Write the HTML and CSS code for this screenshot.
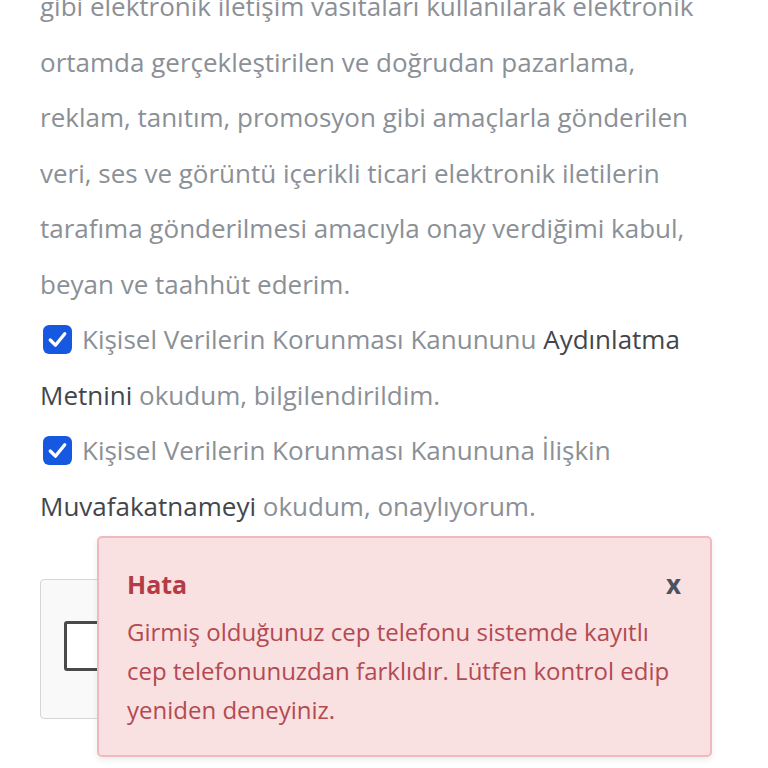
FILE: index.html
```html
<!DOCTYPE html>
<html lang="tr">
<head>
    <meta charset="UTF-8">
    <meta name="viewport" content="width=device-width, initial-scale=1.0">
    <title>Üyelik</title>
    <link rel="stylesheet" href="styles.css">
</head>
<body>

<div class="container">
    <p class="consent-text">gibi elektronik iletişim vasıtaları kullanılarak elektronik ortamda gerçekleştirilen ve doğrudan pazarlama, reklam, tanıtım, promosyon gibi amaçlarla gönderilen veri, ses ve görüntü içerikli ticari elektronik iletilerin tarafıma gönderilmesi amacıyla onay verdiğimi kabul, beyan ve taahhüt ederim.</p>

    <p class="consent-text">
        <span class="check-box">
            <svg viewBox="0 0 28 28" width="29" height="29"><rect x="0" y="0" width="28" height="28" rx="6" fill="#1658e0"/><path d="M7 14.5 L12 19.5 L21 8.5" fill="none" stroke="#fff" stroke-width="3.2" stroke-linecap="round" stroke-linejoin="round"/></svg>
        </span>Kişisel Verilerin Korunması Kanununu <a href="#" class="link">Aydınlatma Metnini</a> okudum, bilgilendirildim.
    </p>

    <p class="consent-text">
        <span class="check-box">
            <svg viewBox="0 0 28 28" width="29" height="29"><rect x="0" y="0" width="28" height="28" rx="6" fill="#1658e0"/><path d="M7 14.5 L12 19.5 L21 8.5" fill="none" stroke="#fff" stroke-width="3.2" stroke-linecap="round" stroke-linejoin="round"/></svg>
        </span>Kişisel Verilerin Korunması Kanununa İlişkin <a href="#" class="link">Muvafakatnameyi</a> okudum, onaylıyorum.
    </p>

    <div class="captcha-box">
        <div class="captcha-check"></div>
    </div>
</div>

<div class="alert">
    <div class="alert-header">
        <span class="alert-title">Hata</span>
        <span class="alert-close">x</span>
    </div>
    <p class="alert-text">Girmiş olduğunuz cep telefonu sistemde kayıtlı cep telefonunuzdan farklıdır. Lütfen kontrol edip yeniden deneyiniz.</p>
</div>

</body>
</html>
```

FILE: styles.css
```css
* {
    margin: 0;
    padding: 0;
    box-sizing: border-box;
    font-family: "Open Sans", Arial, sans-serif;
}

body {
    background: #ffffff;
    width: 768px;
    height: 768px;
    overflow: hidden;
    position: relative;
}

.container {
    width: 730px;
    padding: 0 0 0 40px;
    margin-top: -21px;
}

.consent-text {
    font-size: 26px;
    line-height: 55.5px;
    color: #8b9096;
}

.check-box {
    display: inline-block;
    vertical-align: -5px;
    margin: 0 10px 0 3px;
}

.check-box svg {
    display: block;
}

.link {
    color: #41464d;
    text-decoration: none;
}

.captcha-box {
    margin-top: 45px;
    width: 300px;
    height: 140px;
    background: #f9f9f9;
    border: 1px solid #d6d6d6;
    border-radius: 4px;
    padding: 41px 0 0 23px;
}

.captcha-check {
    width: 50px;
    height: 50px;
    background: #ffffff;
    border: 3px solid #4a4a4a;
    border-radius: 3px;
}

.alert {
    position: absolute;
    left: 97px;
    top: 536px;
    width: 615px;
    height: 221px;
    background: #f9e0e1;
    border: 2px solid #f1b8be;
    border-radius: 5px;
    box-shadow: 0 3px 6px rgba(0, 0, 0, 0.08);
    padding: 28px 28px 0 28px;
}

.alert-header {
    display: flex;
    justify-content: space-between;
    align-items: center;
    margin-bottom: 10px;
}

.alert-title {
    font-size: 25px;
    font-weight: bold;
    color: #b23b45;
}

.alert-close {
    font-size: 26px;
    font-weight: bold;
    color: #4b5260;
    margin-right: 1px;
}

.alert-text {
    font-size: 24px;
    line-height: 39px;
    color: #b34a52;
}
```
